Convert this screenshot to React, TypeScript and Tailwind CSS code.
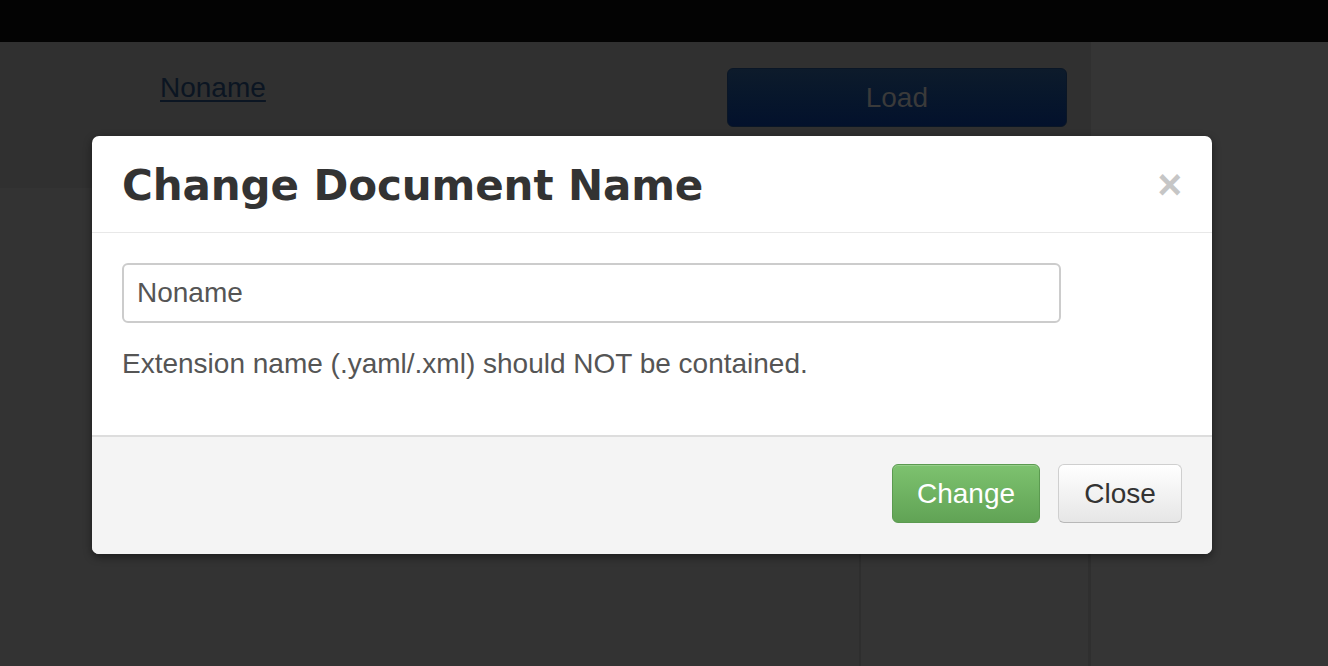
import React from 'react'

function Backdrop() {
  return (
    <div className="flex flex-col h-[666px] bg-[#333333]">
      <div className="h-[42px] bg-[#030303]" />
      <div className="flex flex-1">
        <div className="w-[1091px] flex flex-col">
          {/* header strip */}
          <div className="h-[146px] bg-[#303030] flex items-start">
            <a className="ml-[160px] mt-[29px] text-[28px] leading-[34px] text-[#0b1522] underline underline-offset-[3px]">
              Noname
            </a>
            <div className="ml-[461px] mt-[26px] w-[340px] h-[59px] rounded-[6px] border border-[#0a1626] bg-gradient-to-b from-[#0d1b2b] to-[#03112c] flex items-center justify-center text-[28px] text-[#3a3a3a]">
              Load
            </div>
          </div>
          <div className="flex flex-1">
            <div className="w-[859px] bg-[#333333]" />
            <div className="w-[2px] bg-[#2e2e2e]" />
            <div className="flex-1 bg-[#343434]" />
            <div className="w-[3px] bg-[#2f2f2f]" />
          </div>
        </div>
        <div className="flex-1 bg-[#353535]" />
      </div>
    </div>
  )
}

export default function App() {
  return (
    <div className="relative w-[1328px] h-[666px] overflow-hidden font-['Liberation_Sans',Arial,sans-serif]">
      <Backdrop />

      {/* modal */}
      <div className="absolute left-[92px] top-[136px] w-[1120px] rounded-[7px] bg-white shadow-[0_3px_8px_rgba(0,0,0,0.45)] overflow-hidden">
        <div className="h-[97px] border-b border-[#e8e8e8] flex items-center justify-between pl-[30px] pr-[30px]">
          <h3 className="font-['DejaVu_Sans',sans-serif] text-[42px] font-bold text-[#333333] leading-none tracking-[-0.1px] mt-[4px]">
            Change Document Name
          </h3>
          <span className="text-[42px] font-bold text-[#c6c6c6] leading-none mt-[1px]">×</span>
        </div>

        <div className="px-[30px] pt-[30px] h-[202px]">
          <div className="w-[939px] h-[60px] rounded-[6px] border-2 border-[#cccccc] flex items-center px-[13px] text-[28px] text-[#555555]">
            Noname
          </div>
          <p className="mt-[25px] text-[28px] text-[#555555] leading-[32px]">
            Extension name (.yaml/.xml) should NOT be contained.
          </p>
        </div>

        <div className="h-[119px] border-t-2 border-[#dddddd] bg-[#f4f4f4] flex items-start justify-end gap-[18px] pt-[27px] pr-[30px]">
          <button className="w-[148px] h-[59px] rounded-[6px] border border-[#5b9a50] bg-gradient-to-b from-[#7dc26f] to-[#61a355] text-white text-[28px] shadow-[inset_0_1px_0_rgba(255,255,255,0.2)]">
            Change
          </button>
          <button className="w-[124px] h-[59px] rounded-[6px] border border-[#cfcfcf] border-b-[#b8b8b8] bg-gradient-to-b from-white to-[#e6e6e6] text-[#333333] text-[28px]">
            Close
          </button>
        </div>
      </div>
    </div>
  )
}
